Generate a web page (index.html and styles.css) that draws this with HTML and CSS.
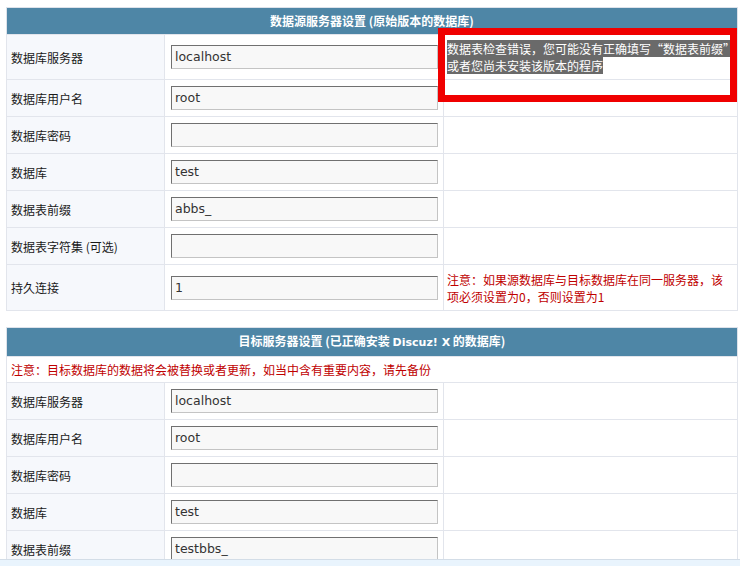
FILE: index.html
```html
<!DOCTYPE html>
<html lang="zh-CN">
<head>
<meta charset="utf-8">
<title>数据库设置</title>
<link rel="stylesheet" href="styles.css">
</head>
<body>
<div class="page">
  <table class="tb">
    <colgroup><col class="c1"><col class="c2"><col class="c3"></colgroup>
    <tr><th colspan="3" class="hd">数据源服务器设置 (原始版本的数据库)</th></tr>
    <tr class="r-first">
      <td class="lbl">数据库服务器</td>
      <td class="val"><div class="inp">localhost</div></td>
      <td class="tip err"><span class="sel">数据表检查错误，您可能没有正确填写“数据表前缀”</span><br><span class="sel">或者您尚未安装该版本的程序</span></td>
    </tr>
    <tr><td class="lbl">数据库用户名</td><td class="val"><div class="inp">root</div></td><td class="tip"></td></tr>
    <tr><td class="lbl">数据库密码</td><td class="val"><div class="inp"></div></td><td class="tip"></td></tr>
    <tr><td class="lbl">数据库</td><td class="val"><div class="inp">test</div></td><td class="tip"></td></tr>
    <tr><td class="lbl">数据表前缀</td><td class="val"><div class="inp">abbs_</div></td><td class="tip"></td></tr>
    <tr><td class="lbl">数据表字符集 (可选)</td><td class="val"><div class="inp"></div></td><td class="tip"></td></tr>
    <tr class="r-note"><td class="lbl">持久连接</td><td class="val"><div class="inp">1</div></td><td class="tip red">注意：如果源数据库与目标数据库在同一服务器，该项必须设置为0，否则设置为1</td></tr>
  </table>

  <table class="tb tb2">
    <colgroup><col class="c1"><col class="c2"><col class="c3"></colgroup>
    <tr><th colspan="3" class="hd">目标服务器设置 (已正确安装 <span class="lat">Discuz! X</span> 的数据库)</th></tr>
    <tr><td colspan="3" class="notice red">注意：目标数据库的数据将会被替换或者更新，如当中含有重要内容，请先备份</td></tr>
    <tr><td class="lbl">数据库服务器</td><td class="val"><div class="inp">localhost</div></td><td class="tip"></td></tr>
    <tr><td class="lbl">数据库用户名</td><td class="val"><div class="inp">root</div></td><td class="tip"></td></tr>
    <tr><td class="lbl">数据库密码</td><td class="val"><div class="inp"></div></td><td class="tip"></td></tr>
    <tr><td class="lbl">数据库</td><td class="val"><div class="inp">test</div></td><td class="tip"></td></tr>
    <tr><td class="lbl">数据表前缀</td><td class="val"><div class="inp">testbbs_</div></td><td class="tip"></td></tr>
  </table>
</div>
<div class="redbox"></div>
<div class="footer"></div>
</body>
</html>
```

FILE: styles.css
```css
html, body {
  margin: 0;
  padding: 0;
  background: #fff;
  height: 566px;
  overflow: hidden;
}
body {
  font-family: "Noto Sans CJK SC", "DejaVu Sans", sans-serif;
  font-size: 12px;
  color: #1a1a1a;
}
.page {
  padding: 7px 0 0 6px;
}
.tb {
  border-collapse: collapse;
  width: 731px;
  table-layout: fixed;
  border: 1px solid #dde2ea;
}
.tb2 {
  margin-top: 16px;
}
.c1 { width: 158px; }
.c2 { width: 279px; }
.c3 { width: 294px; }
.hd {
  background: #4e86a6;
  color: #fff;
  font-weight: bold;
  height: 26px;
  padding: 0;
  line-height: 26px;
  text-align: center;
  font-size: 12px;
}
.lat {
  font-family: "DejaVu Sans", sans-serif;
  font-size: 11px;
}
td {
  border: 1px solid #e2e5ec;
  padding: 0;
  vertical-align: middle;
}
.lbl {
  background: #f6f8fc;
  height: 36px;
  padding: 0 4px;
  line-height: 17px;
}
.val {
  padding: 0 6px;
}
.inp {
  box-sizing: border-box;
  width: 267px;
  height: 24px;
  border: 1px solid;
  border-color: #707070 #c4c4c4 #c4c4c4 #707070;
  background: #f8f8f8;
  font-family: "DejaVu Sans", sans-serif;
  font-size: 12.5px;
  line-height: 22px;
  padding: 0 3px;
  color: #333;
}
.tip {
  padding: 0 3px;
  line-height: 17px;
}
.r-first .lbl {
  height: 44px;
}
.err {
  line-height: 17px;
  color: #fff;
  white-space: nowrap;
  padding: 0 0 0 3px;
}
.sel {
  background: #6a6a6a;
  color: #fff;
}
.r-note .lbl {
  height: 45px;
}
.red {
  color: #c00000;
}
.notice {
  height: 25px;
  padding: 0 4px;
  line-height: 17px;
}
.redbox {
  position: absolute;
  left: 438px;
  top: 28px;
  width: 299px;
  height: 74px;
  box-sizing: border-box;
  border: 7px solid #f00000;
}
.footer {
  position: absolute;
  left: 0;
  right: 0;
  top: 559px;
  height: 7px;
  background: #e9f4fd;
  border-top: 1px solid #d3dde7;
}
```
